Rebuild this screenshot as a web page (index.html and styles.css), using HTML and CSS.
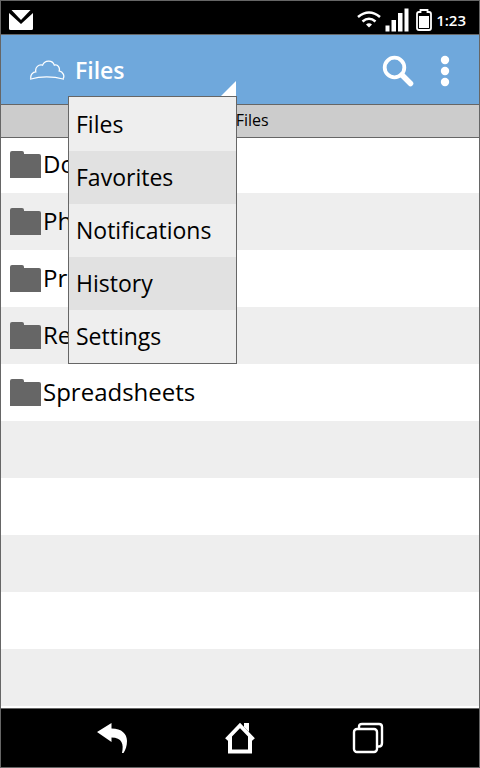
FILE: index.html
```
<!DOCTYPE html>
<html lang="en">
  <head>
    <meta charset="UTF-8" />
    <meta name="viewport" content="width=device-width, initial-scale=1.0" />
    <title>Files</title>
    <link rel="stylesheet" href="styles.css">
  </head>

  <body>
    <div class="phone">
      <div class="status">
        <svg class="mail" width="24" height="20" viewBox="0 0 24 20">
          <path d="M0 3L12 14L24 3V18.5Q24 20 22.500 20H1.500Q0 20 0 18.500Z" fill="#fff" />
          <path d="M2.500 0H21.500L12 10Z" fill="#fff" />
        </svg>
        <div class="signals">
          <svg width="24" height="17" viewBox="0 0 24 17">
            <g fill="none" stroke="#fff" stroke-width="2.600">
              <path d="M1 6Q12 -3 23 6" />
              <path d="M5.500 10.500Q12 5 18.500 10.500" />
            </g>
            <path d="M9 13.500Q12 11 15 13.500L12 16.500Z" fill="#fff" />
          </svg>
          <svg width="24" height="24" viewBox="0 0 24 24" fill="#fff">
            <path d="M0.500 17.500h4v6h-4zM6.500 12h4.500v11.500h-4.500zM13 5h4.500v18.500h-4.500zM19.500 0.500h4v23h-4z" />
          </svg>
          <svg class="battery" width="16" height="22" viewBox="0 0 16 22">
            <path d="M4.500 1H11.500V3H13Q15 3 15 5V19Q15 21 13 21H3Q1 21 1 19V5Q1 3 3 3H4.500Z" fill="none" stroke="#fff" stroke-width="1.800" />
            <path d="M3 7h10v12h-10z" fill="#fff" />
          </svg>
          <span class="time">1:23</span>
        </div>
      </div>

      <header class="header">
        <svg class="cloud" width="36" height="22" viewBox="0 0 37 22" fill="none" stroke="#fff">
          <path d="M2 20C1 16 4 13 7 13C6 8 10 5 14 6C16 1 24 0 26 6C30 5 32 9 31 12C35 13 37 17 35 20" stroke-width="1.300" />
          <path d="M1 20.500Q18 15.500 36 20.500" stroke-width="1.300" />
        </svg>
        <div class="dropdown">
          <button class="title" aria-haspopup="true" aria-expanded="true">Files</button>
          <div class="menu">
            <button>Files</button>
            <button>Favorites</button>
            <button>Notifications</button>
            <button>History</button>
            <button>Settings</button>
          </div>
        </div>
        <div class="actions">
          <button aria-label="Search">
            <svg width="32" height="32" viewBox="0 0 32 32" fill="none" stroke="#fff">
              <circle cx="12.500" cy="12.500" r="9.800" stroke-width="3.800" />
              <path d="M20 20L28.500 28.500" stroke-width="5.500" stroke-linecap="round" />
            </svg>
          </button>
          <button aria-label="More options">
            <svg width="10" height="32" viewBox="0 0 10 32" fill="#fff">
              <circle cx="5" cy="5" r="4.200" />
              <circle cx="5" cy="16" r="4.200" />
              <circle cx="5" cy="27" r="4.200" />
            </svg>
          </button>
        </div>
      </header>

      <div class="path">All Files</div>

      <!-- the empty rows keep the stripes going down to the nav bar -->
      <ul class="files">
        <li><svg class="folder" viewBox="0 0 31 27"><path d="M0 2Q0 0 2 0H12Q14 0 14 2V3H29Q31 3 31 5V27H0Z" /></svg><span>Documents</span></li>
        <li><svg class="folder" viewBox="0 0 31 27"><path d="M0 2Q0 0 2 0H12Q14 0 14 2V3H29Q31 3 31 5V27H0Z" /></svg><span>Photos</span></li>
        <li><svg class="folder" viewBox="0 0 31 27"><path d="M0 2Q0 0 2 0H12Q14 0 14 2V3H29Q31 3 31 5V27H0Z" /></svg><span>Projects</span></li>
        <li><svg class="folder" viewBox="0 0 31 27"><path d="M0 2Q0 0 2 0H12Q14 0 14 2V3H29Q31 3 31 5V27H0Z" /></svg><span>Reports</span></li>
        <li><svg class="folder" viewBox="0 0 31 27"><path d="M0 2Q0 0 2 0H12Q14 0 14 2V3H29Q31 3 31 5V27H0Z" /></svg><span>Spreadsheets</span></li>
        <li></li>
        <li></li>
        <li></li>
        <li></li>
        <li></li>
      </ul>

      <nav class="nav">
        <button aria-label="Back">
          <svg width="32" height="32" viewBox="0 0 32 32">
            <path d="M1 10L15.500 1V6.500C26 6.500 31 12 31 19C31 24 29.500 28 27.500 31H26C28 22 26 15.500 15.500 15.500V20Z" fill="#fff" />
          </svg>
        </button>
        <button aria-label="Home">
          <svg width="32" height="32" viewBox="0 0 32 32">
            <path d="M20 1H25V10L20 5Z" fill="#fff" />
            <path d="M6 14V29.500H26V14" fill="none" stroke="#fff" stroke-width="4" />
            <path d="M2.500 17.500L16 3.500L29.500 17.500" fill="none" stroke="#fff" stroke-width="3.800" />
          </svg>
        </button>
        <button aria-label="Recent apps">
          <svg width="32" height="32" viewBox="0 0 32 32" fill="none" stroke="#fff" stroke-width="2.400">
            <rect x="2" y="7" width="23" height="23" rx="3" />
            <path d="M7 7V5Q7 2 10 2H27Q30 2 30 5V21Q30 24.500 27 24.500H25.500" />
          </svg>
        </button>
      </nav>
    </div>
  </body>
</html>
```
FILE: styles.css
```
* {
  box-sizing: border-box;
  font-family: "Open Sans", sans-serif;
}

body {
  margin: 0;
}

button {
  border: none;
  background: none;
  padding: 0;
  cursor: pointer;
}

svg {
  display: block;
}

.phone {
  display: flex;
  flex-direction: column;
  height: 100vh;
  border: 1px solid #666;
}

.status {
  display: flex;
  justify-content: space-between;
  align-items: center;
  height: 34px;
  flex-shrink: 0;
  padding: 4px 13px 0 8px;
  background-color: black;
  border-bottom: 1px solid #666;
}

.signals {
  display: flex;
  align-items: center;
  gap: 4px;
}

.battery {
  margin-left: 3px;
}

.time {
  color: white;
  font-size: 15px;
  line-height: 20px;
  font-weight: 600;
}

.header {
  display: flex;
  align-items: center;
  height: 70px;
  flex-shrink: 0;
  padding: 0 29px 0 28px;
  background-color: #6fa8dc;
  border-bottom: 1px solid #666;
}

.dropdown {
  position: relative;
  align-self: stretch;
  width: 169px;
  margin-left: 3px;
}

.title {
  width: 100%;
  height: 100%;
  padding-left: 7px;
  color: white;
  font-size: 23px;
  font-weight: 600;
  text-align: left;
}

/* little white corner over the menu */
.title::after {
  content: "";
  position: absolute;
  top: 46px;
  right: 1px;
  border-left: 15px solid transparent;
  border-bottom: 15px solid white;
}

.menu {
  position: absolute;
  z-index: 1;
  top: 61px;
  left: 0;
  width: 100%;
  padding-top: 1px;
  background-color: #eee;
  border: 1px solid #666;
}

.menu button {
  display: block;
  width: 100%;
  height: 53px;
  padding: 0 0 2px 7px;
  color: black;
  font-size: 23px;
  text-align: left;
}

.menu button:nth-child(even) {
  background-color: #e1e1e1;
}

.actions {
  display: flex;
  align-items: center;
  gap: 26px;
  margin-left: auto;
  padding-top: 3px;
}

.path {
  flex-shrink: 0;
  height: 33px;
  padding-left: 2px;
  background-color: #ccc;
  border-bottom: 1px solid #666;
  font-size: 16px;
  line-height: 30px;
  text-align: center;
}

.files {
  flex: 1;
  margin: 0;
  padding: 0;
  overflow: hidden;
  list-style: none;
  font-size: 24px;
}

.files li {
  display: flex;
  align-items: center;
  gap: 2px;
  height: 57px;
  padding-left: 9px;
}

.files li:first-child {
  height: 55px;
  padding-bottom: 2px;
}

.files li:nth-child(even) {
  background-color: #eee;
}

.files span {
  padding-bottom: 2px;
}

.folder {
  width: 31px;
  height: 27px;
  fill: #666;
}

.nav {
  display: flex;
  justify-content: center;
  align-items: center;
  gap: 96px;
  flex-shrink: 0;
  height: 59px;
  background-color: black;
  border-top: 1px solid #666;
}
```
